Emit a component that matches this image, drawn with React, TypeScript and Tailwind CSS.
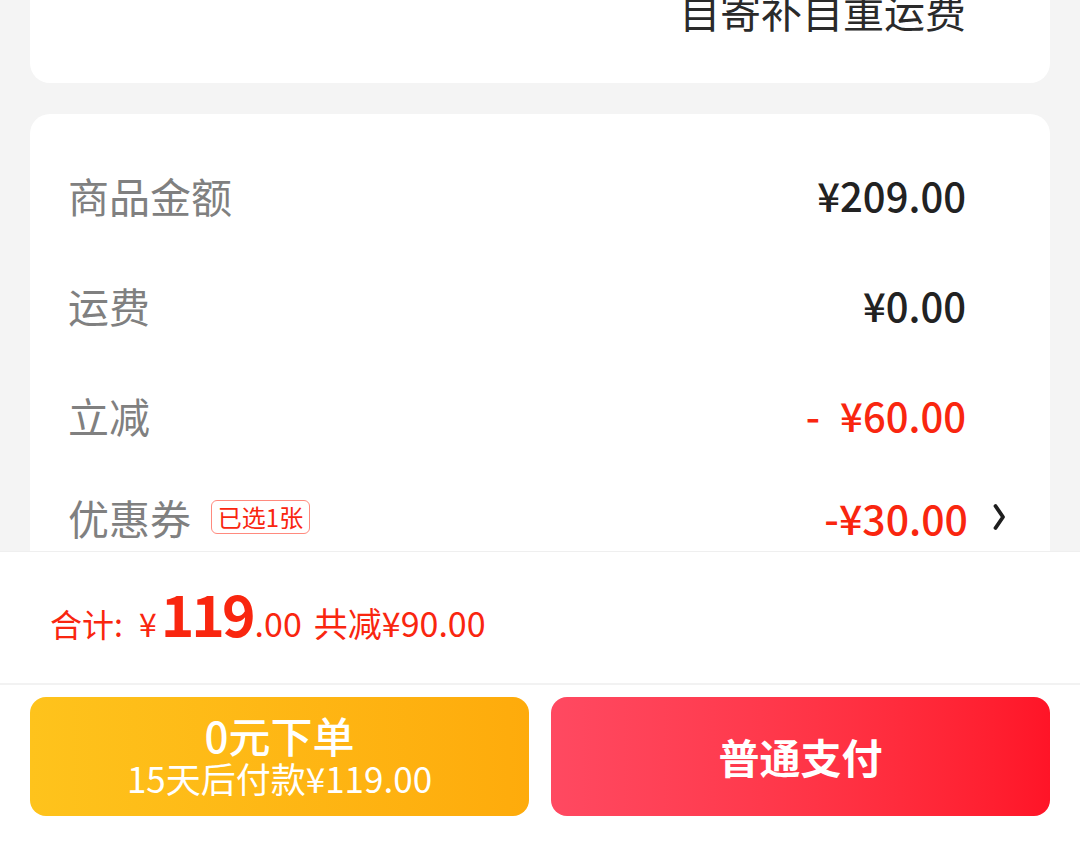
import React from "react";

const font = { fontFamily: '"Noto Sans CJK SC", "Noto Sans", sans-serif' };

function Row({ label, children, h = "h-[110px]" }: { label: string; children: React.ReactNode; h?: string }) {
  return (
    <div className={`flex ${h} items-center justify-between pl-[38px] pr-[84px]`}>
      <span className="text-[41px] leading-none text-[#808080]">{label}</span>
      {children}
    </div>
  );
}

export default function App() {
  return (
    <div className="flex h-[854px] w-[1080px] flex-col overflow-hidden bg-[#f4f4f4]" style={font}>
      <div className="mx-[30px] h-[83px] shrink-0 overflow-hidden rounded-b-[20px] bg-white">
        <div className="-mt-[18px] pr-[84px] text-right text-[41px] leading-[56px] text-[#2a2a2a]">自寄补自重运费</div>
      </div>

      <div className="mx-[30px] mt-[31px] h-[437px] shrink-0 overflow-hidden rounded-t-[20px] bg-white pt-[26px]">
        <Row label="商品金额">
          <span className="text-[40px] font-medium leading-none text-[#222222]">¥209.00</span>
        </Row>
        <Row label="运费">
          <span className="text-[40px] font-medium leading-none text-[#222222]">¥0.00</span>
        </Row>
        <Row label="立减">
          <span className="text-[40px] font-medium leading-none text-[#f9260f]">
            -<span className="ml-[20px]">¥60.00</span>
          </span>
        </Row>
        <div className="flex h-[94px] items-center justify-between pl-[38px] pr-[45px]">
          <div className="flex items-center">
            <span className="text-[41px] leading-none text-[#808080]">优惠券</span>
            <span className="ml-[20px] flex h-[34px] w-[99px] items-center justify-center rounded-[6px] border border-[#ff8a7e] text-[24px] leading-none text-[#f9260f]">
              已选1张
            </span>
          </div>
          <div className="flex items-center gap-[25px]">
            <span className="text-[41px] font-medium leading-none text-[#f9260f]">-¥30.00</span>
            <svg width="12" height="28" viewBox="0 0 12 28" fill="none">
              <path d="M2.5 3 L10 14 L2.5 25" stroke="#1e1e1e" strokeWidth="3.8" strokeLinecap="round" strokeLinejoin="round" />
            </svg>
          </div>
        </div>
      </div>

      <div className="flex flex-1 flex-col border-t border-[#efefef] bg-white">
        <div className="flex h-[133px] items-center border-b-2 border-[#f2f2f2] pl-[50px] text-[#f9260f]">
          <div className="-mt-[10px] flex items-baseline">
            <span className="text-[32px] leading-none">合计:</span>
            <span className="ml-[16px] text-[32px] leading-none">¥</span>
            <span className="ml-[4px] text-[57px] font-bold leading-none tracking-[-3px]">119</span>
            <span className="ml-[2px] text-[34px] leading-none">.00</span>
            <span className="ml-[12px] text-[34px] leading-none">共减¥90.00</span>
          </div>
        </div>
        <div className="flex gap-[22px] px-[30px] pt-[12px]">
          <div className="flex h-[119px] flex-1 flex-col items-center justify-center rounded-[16px] bg-gradient-to-r from-[#fec31c] to-[#feab0b] pb-[2px] text-white">
            <span className="text-[42px] font-medium leading-[44px]">0元下单</span>
            <span className="text-[35px] leading-[42px]">15天后付款¥119.00</span>
          </div>
          <div className="flex h-[119px] flex-1 items-center justify-center rounded-[16px] bg-gradient-to-r from-[#ff4961] to-[#ff1427] text-white">
            <span className="text-[41px] font-bold leading-none">普通支付</span>
          </div>
        </div>
      </div>
    </div>
  );
}
